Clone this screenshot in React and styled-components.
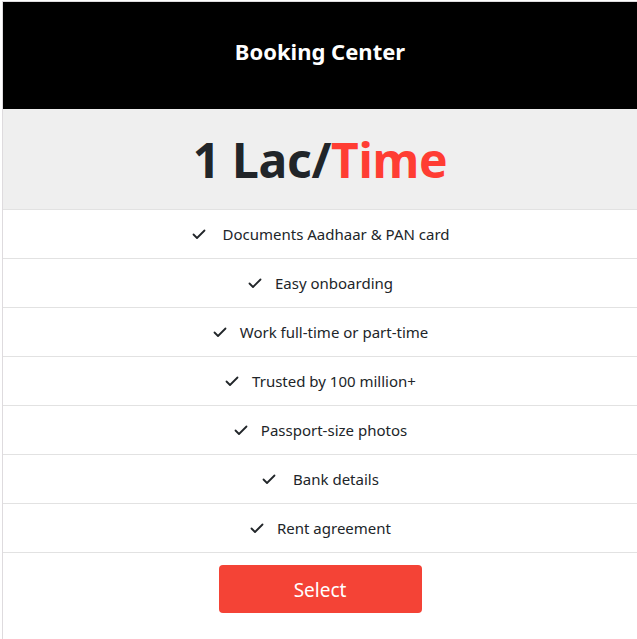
import React from 'react'
import styled, { createGlobalStyle } from 'styled-components'

const GlobalStyle = createGlobalStyle`
  html, body {
    margin: 0;
    padding: 0;
    overflow: hidden;
    background: #ffffff;
  }
  body {
    font-family: "Noto Sans", "Open Sans", "Liberation Sans", sans-serif;
    color: #212529;
  }
`

const features = [
  { label: 'Documents Aadhaar & PAN card', wide: true },
  { label: 'Easy onboarding' },
  { label: 'Work full-time or part-time' },
  { label: 'Trusted by 100 million+' },
  { label: 'Passport-size photos' },
  { label: 'Bank details', wide: true },
  { label: 'Rent agreement' },
]

function Check() {
  return (
    <CheckIcon viewBox="0 0 16 16" aria-hidden="true">
      <path
        d="M2.5 8.5 L6 12 L13.5 4.5"
        fill="none"
        stroke="currentColor"
        strokeWidth="1.8"
        strokeLinecap="round"
        strokeLinejoin="round"
      />
    </CheckIcon>
  )
}

export default function App() {
  return (
    <Page>
      <GlobalStyle />
      <Card>
        <Header>Booking Center</Header>
        <PriceBlock>
          <Price>
            1 Lac/<Accent>Time</Accent>
          </Price>
        </PriceBlock>
        <FeatureList>
          {features.map((item) => (
            <FeatureRow key={item.label}>
              <Check />
              <FeatureText wide={item.wide ? 1 : 0}>{item.label}</FeatureText>
            </FeatureRow>
          ))}
        </FeatureList>
        <Footer>
          <SelectButton type="button">Select</SelectButton>
        </Footer>
      </Card>
    </Page>
  )
}

const Page = styled.div`
  padding: 1px 0 0 2px;
`

const Card = styled.div`
  display: flex;
  flex-direction: column;
  width: 634px;
  border: 1px solid #dedbde;
  background: #ffffff;
`

const Header = styled.div`
  display: flex;
  align-items: center;
  justify-content: center;
  height: 107px;
  padding-bottom: 10px;
  box-sizing: border-box;
  background: #000000;
  color: #ffffff;
  font-size: 22px;
  font-weight: 700;
`

const PriceBlock = styled.div`
  display: flex;
  align-items: center;
  justify-content: center;
  height: 100px;
  background: #efefef;
  border-bottom: 1px solid #e2e2e2;
`

const Price = styled.h1`
  margin: 0;
  font-size: 48px;
  font-weight: 700;
  color: #212529;
  letter-spacing: -0.3px;
`

const Accent = styled.span`
  color: #ff3d33;
`

const FeatureList = styled.ul`
  list-style: none;
  margin: 0;
  padding: 0;
`

const FeatureRow = styled.li`
  display: flex;
  align-items: center;
  justify-content: center;
  gap: 12px;
  height: 48px;
  border-bottom: 1px solid #e2e2e2;
  font-size: 15px;
  color: #212529;
`

const CheckIcon = styled.svg`
  width: 16px;
  height: 16px;
  color: #212529;
  flex-shrink: 0;
`

const FeatureText = styled.span`
  padding-left: ${({ wide }) => (wide ? '4px' : '0')};
`

const Footer = styled.div`
  display: flex;
  justify-content: center;
  padding: 12px 0 40px;
`

const SelectButton = styled.button`
  width: 203px;
  height: 48px;
  padding-top: 2px;
  border: none;
  border-radius: 4px;
  background: #f44336;
  color: #ffffff;
  font-family: inherit;
  font-size: 19px;
  cursor: pointer;
`
